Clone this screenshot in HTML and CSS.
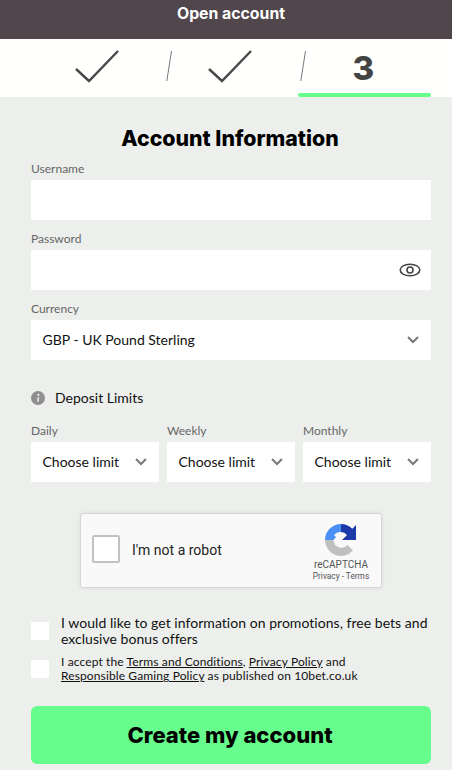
FILE: index.html
```html
<!DOCTYPE html>
<html>
<head>
    <meta charset="UTF-8">
    <title>Open account</title>
    <link rel="stylesheet" href="styles.css">
</head>
<body>
    <header class="topbar">Open account</header>

    <div class="steps">
        <div class="step">
            <span></span>
            <svg class="check" width="44" height="33" viewBox="0 0 44 33"><path d="M1 19l13 12L43 1"/></svg>
        </div>
        <div class="step">
            <svg class="slash" width="6" height="30" viewBox="0 0 6 30"><path d="M5.5 0L.8 30"/></svg>
            <svg class="check" width="44" height="33" viewBox="0 0 44 33"><path d="M1 19l13 12L43 1"/></svg>
        </div>
        <div class="step current">
            <svg class="slash" width="6" height="30" viewBox="0 0 6 30"><path d="M5.5 0L.8 30"/></svg>
            <span class="step-num">3</span>
            <div class="step-bar"></div>
        </div>
    </div>

    <main class="form">
        <h1>Account Information</h1>

        <div class="field">
            <label>Username</label>
            <input class="input" type="text">
        </div>
        <div class="field">
            <label>Password</label>
            <div class="input">
                <span></span>
                <svg width="22" height="14" viewBox="0 0 22 14" class="eye">
                    <ellipse cx="11" cy="7" rx="9.8" ry="5.8"/>
                    <circle cx="11" cy="7" r="3"/>
                </svg>
            </div>
        </div>
        <div class="field">
            <label>Currency</label>
            <div class="input select">
                <span>GBP - UK Pound Sterling</span>
                <svg class="chevron" width="12" height="8" viewBox="0 0 12 8"><path d="M1 1l5 5 5-5"/></svg>
            </div>
        </div>

        <div class="limits-title">
            <svg width="14" height="14" viewBox="0 0 14 14">
                <circle cx="7" cy="7" r="7" fill="#8f8f8f"/>
                <circle cx="7.4" cy="3.9" r="1.1" fill="#edefed"/>
                <path d="M6.6 6.2h1.6l-.6 4.6H6z" fill="#edefed"/>
            </svg>
            <span>Deposit Limits</span>
        </div>

        <div class="limits">
            <div class="limit">
                <label>Daily</label>
                <div class="input select">
                    <span>Choose limit</span>
                    <svg class="chevron" width="12" height="8" viewBox="0 0 12 8"><path d="M1 1l5 5 5-5"/></svg>
                </div>
            </div>
            <div class="limit">
                <label>Weekly</label>
                <div class="input select">
                    <span>Choose limit</span>
                    <svg class="chevron" width="12" height="8" viewBox="0 0 12 8"><path d="M1 1l5 5 5-5"/></svg>
                </div>
            </div>
            <div class="limit">
                <label>Monthly</label>
                <div class="input select">
                    <span>Choose limit</span>
                    <svg class="chevron" width="12" height="8" viewBox="0 0 12 8"><path d="M1 1l5 5 5-5"/></svg>
                </div>
            </div>
        </div>

        <div class="captcha">
            <span class="captcha-box"></span>
            <span class="captcha-text">I'm not a robot</span>
            <div class="captcha-brand">
                <svg width="32" height="32" viewBox="0 0 32 32">
                    <path d="M16 0A16 16 0 0 1 27.3 4.7L31 1v15H17l5-5A8 8 0 0 0 16 8z" fill="#1c3aa9"/>
                    <path d="M16 0A16 16 0 0 0 0 16h8.5L11 13l-2-2A8 8 0 0 1 16 8z" fill="#4a90f5"/>
                    <path d="M0 16A16 16 0 0 0 28 26.5L22.5 21A8 8 0 0 1 8.5 16z" fill="#bfbfbf"/>
                </svg>
                <div class="captcha-name">reCAPTCHA</div>
                <div class="captcha-links">Privacy - Terms</div>
            </div>
        </div>

        <div class="consent">
            <input class="tick" type="checkbox">
            <p>I would like to get information on promotions, free bets and exclusive bonus offers</p>
        </div>
        <div class="consent small">
            <input class="tick" type="checkbox">
            <p>I accept the <a href="#">Terms and Conditions</a>, <a href="#">Privacy Policy</a> and<br><a href="#">Responsible Gaming Policy</a> as published on 10bet.co.uk</p>
        </div>

        <button class="submit">Create my account</button>
    </main>
</body>
</html>
```

FILE: styles.css
```css
* {
    margin: 0;
    padding: 0;
    box-sizing: border-box;
}

body {
    font-family: "Lato", "Liberation Sans", sans-serif;
    background-color: #edefed;
    color: #111;
    width: 452px;
    height: 770px;
    overflow: hidden;
}

.topbar {
    height: 39px;
    padding: 5px 0 0 10px;
    background-color: #50464b;
    color: #fff;
    font-family: "Inter", sans-serif;
    font-size: 15.8px;
    font-weight: 700;
    line-height: 18px;
    text-align: center;
}

.steps {
    display: grid;
    grid-template-columns: repeat(3, 1fr);
    height: 58px;
    padding: 0 21px 0 31px;
    background-color: #fffffd;
}

.step {
    display: grid;
    grid-template-columns: 10px 1fr 10px;
    grid-template-rows: 1fr 4px;
    align-items: center;
    justify-items: center;
}

.check {
    margin-right: 2px;
    fill: none;
    stroke: #484848;
    stroke-width: 2.4;
}

.slash {
    fill: none;
    stroke: #77777a;
    stroke-width: 1;
}

.step-num {
    margin: 4px 2px 0 0;
    font-family: "Inter", sans-serif;
    font-size: 33px;
    font-weight: 800;
    line-height: 1;
    color: #444;
}

.step-bar {
    grid-column: 1 / -1;
    grid-row: 2;
    width: 100%;
    height: 4px;
    border-radius: 2px;
    background-color: #66fd8d;
}

.form {
    padding: 0 21px 0 31px;
}

h1 {
    margin-top: 27px;
    padding-right: 2px;
    font-family: "Inter", sans-serif;
    font-size: 21.3px;
    font-weight: 800;
    line-height: 28px;
    text-align: center;
    color: #000;
}

label {
    display: block;
    height: 15px;
    margin-bottom: 4px;
    font-size: 12px;
    line-height: 15px;
    color: #666;
}

.field {
    margin-bottom: 11px;
}

h1 + .field {
    margin-top: 9px;
}

.input {
    display: flex;
    align-items: center;
    justify-content: space-between;
    width: 100%;
    height: 40px;
    padding: 0 12px 0 11.5px;
    border: 0;
    background-color: #fff;
    font-size: 14px;
    color: #111;
}

.select span {
    margin-top: -1px;
}

.eye {
    fill: none;
    stroke: #444;
    stroke-width: 1.6;
    margin-right: -2px;
}

.chevron {
    fill: none;
    stroke: #777;
    stroke-width: 2;
}

.limits-title {
    display: flex;
    align-items: center;
    gap: 10px;
    margin-top: 29px;
    font-size: 14px;
    line-height: 18px;
}

.limits {
    display: grid;
    grid-template-columns: repeat(3, 128px);
    gap: 8px;
    margin-top: 16px;
}

.captcha {
    display: flex;
    align-items: center;
    width: 302px;
    height: 75px;
    margin: 31px auto 0;
    padding: 0 11px;
    background-color: #f9f9f9;
    border: 1px solid #d6d6d6;
    border-radius: 3px;
    box-shadow: 0 0 4px rgba(0, 0, 0, 0.08);
    font-family: "Roboto", sans-serif;
}

.captcha-box {
    width: 28px;
    height: 28px;
    margin-bottom: 3px;
    background-color: #fff;
    border: 2px solid #c1c1c1;
    border-radius: 2px;
}

.captcha-text {
    flex: 1;
    margin: 0 0 1px 12px;
    font-size: 14px;
    color: #222;
}

.captcha-brand {
    display: flex;
    flex-direction: column;
    align-items: center;
    width: 58px;
    margin-top: 4px;
    color: #555;
}

.captcha-name {
    margin-top: 2px;
    font-size: 10px;
    line-height: 13px;
}

.captcha-links {
    font-size: 8.3px;
    line-height: 11px;
    color: #555;
}

.consent {
    display: flex;
    align-items: center;
    gap: 12px;
    font-size: 14px;
    letter-spacing: 0.04px;
    line-height: 16px;
    margin-top: 27px;
}

.consent.small {
    font-size: 12px;
    letter-spacing: 0.12px;
    line-height: 14px;
    margin-top: 8px;
}

.tick {
    appearance: none;
    flex: none;
    width: 18px;
    height: 18px;
    background-color: #fff;
}

a {
    color: inherit;
}

.submit {
    display: block;
    width: 100%;
    height: 58px;
    margin-top: 23px;
    padding-right: 2px;
    border: 0;
    border-radius: 6px;
    background-color: #66fd8d;
    color: #000;
    font-family: "Inter", sans-serif;
    font-size: 22px;
    font-weight: 800;
}
```
